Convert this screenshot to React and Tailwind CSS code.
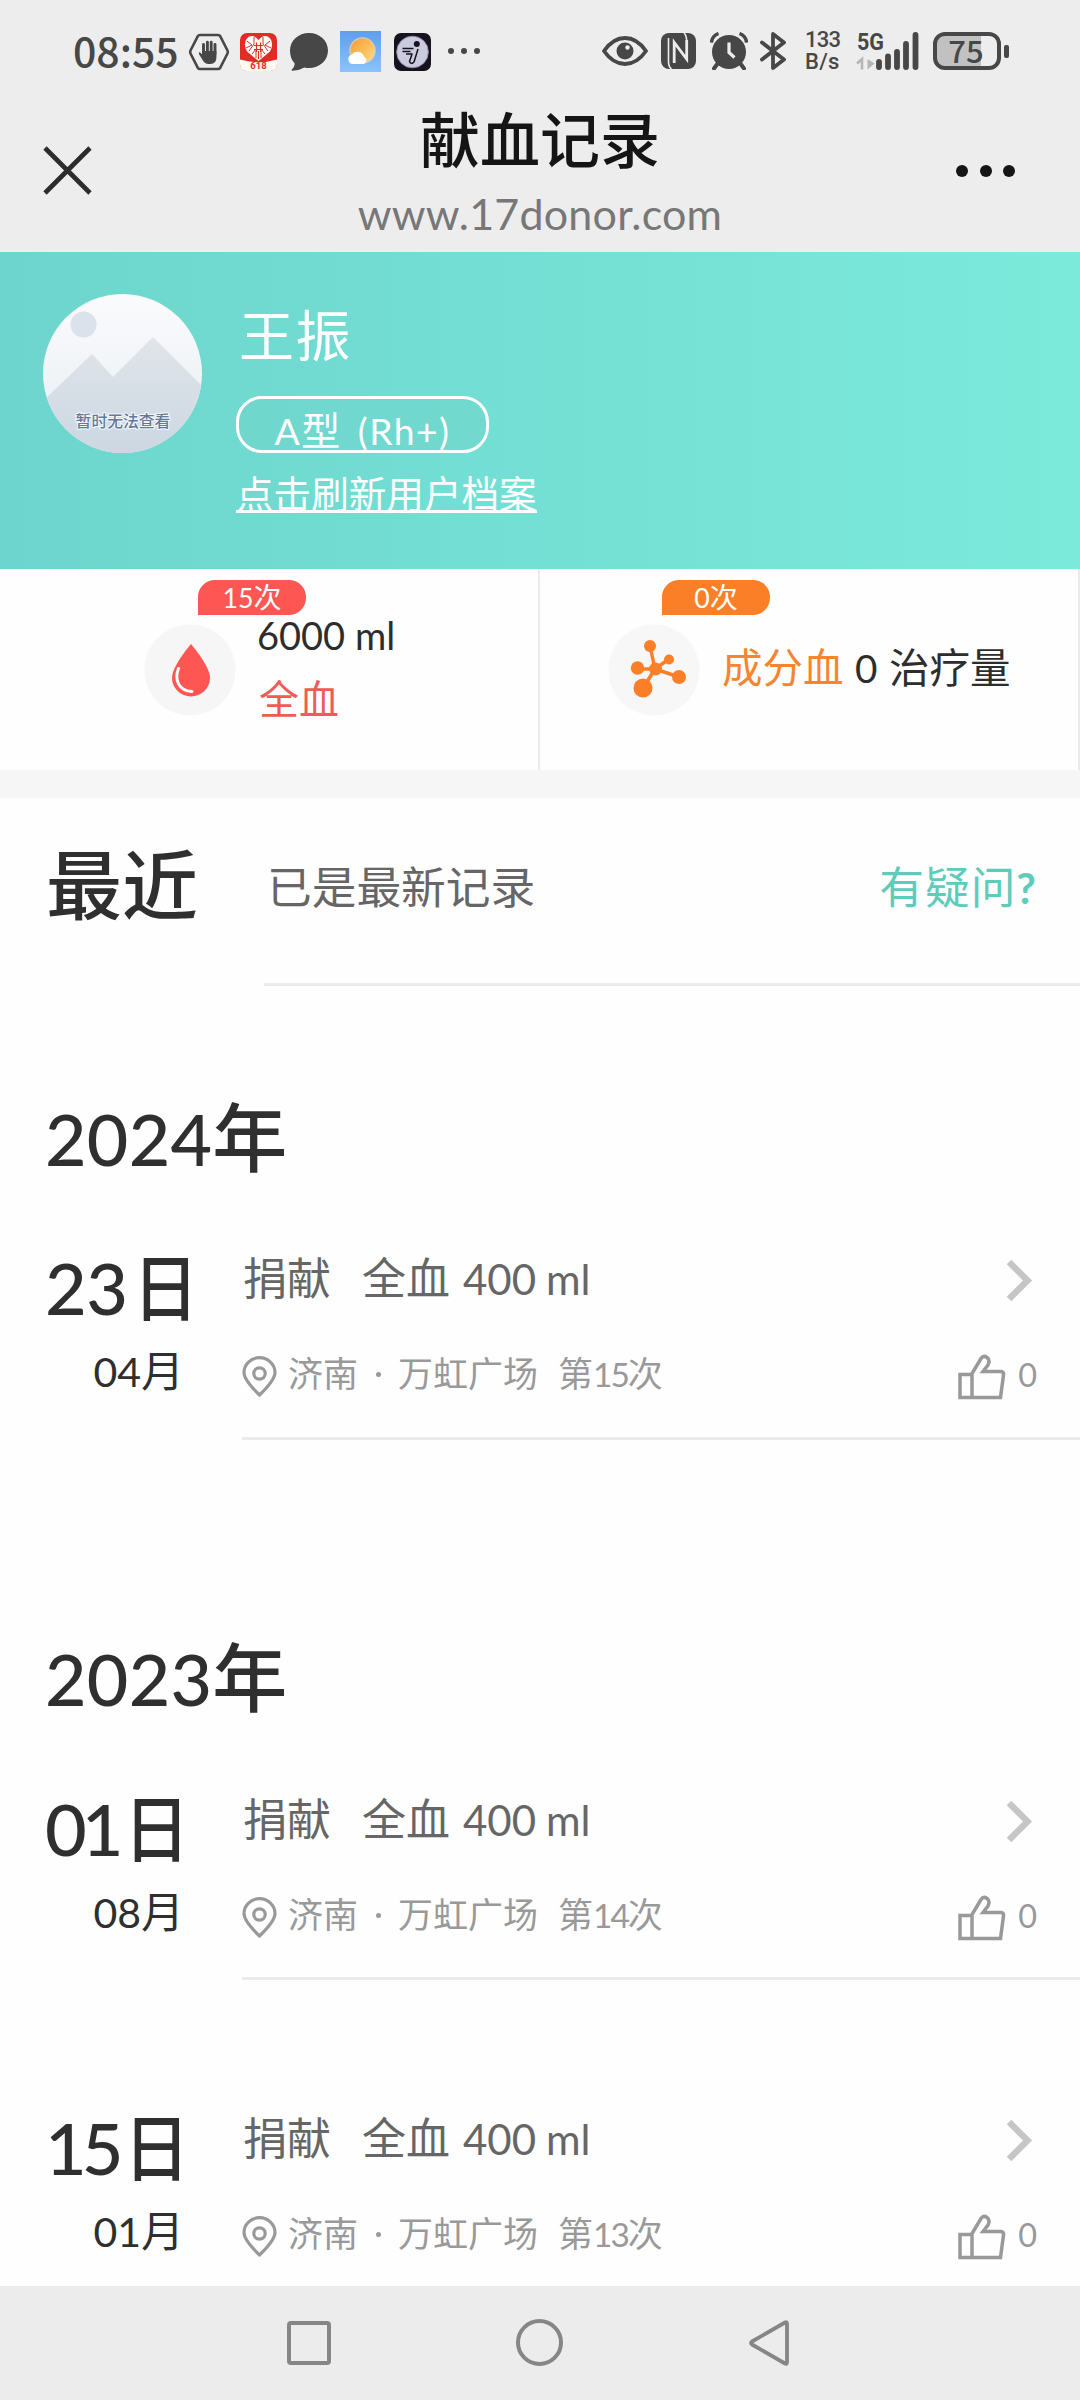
import React from "react";

const years = [
  {
    year: "2024",
    gap: "mt-[98px]",
    records: [{ day: "23", month: "04", times: "15", box: "h-[256px]", dayStyle: "w-[84px] tracking-[-0.500px]", line: true }],
  },
  {
    year: "2023",
    gap: "mt-[184px]",
    records: [
      { day: "01", month: "08", times: "14", box: "mt-px h-[255px]", dayStyle: "w-[75px] tracking-[-5px]", line: true },
      { day: "15", month: "01", times: "13", box: "mt-[64px] h-[242px]", dayStyle: "w-[75px] tracking-[-5px]", line: false },
    ],
  },
];

function Latin({ children, className = "" }) {
  return <span className={"font-[Lato,sans-serif] text-[0.955em] leading-none " + className}>{children}</span>;
}

function StatusBar() {
  return (
    <div className="flex h-[100px] items-center pl-[73px] text-[#474747]">
      <span className="w-[114px] -translate-y-px text-[41px] leading-[60px] font-medium whitespace-nowrap">08:55</span>

      <svg className="mt-[3px] ml-[1px] h-[38px] w-[42px]" viewBox="0 0 42 38">
        <path d="M12 2h18q1.500 0 2.300 1.300L39.500 17.500q.8 1.500 0 3L32.300 34.700Q31.500 36 30 36H12q-1.500 0-2.300-1.300L2.500 20.500q-.8-1.500 0-3L9.700 3.300Q10.500 2 12 2Z" fill="none" stroke="currentColor" strokeWidth="2.600" />
        <path d="M15.500 20V11.500M19.400 20V9.200M23.200 20V9.200M27 21V11.500" stroke="currentColor" strokeWidth="2.900" strokeLinecap="round" />
        <path d="M14.100 18h14.300v6.500q0 6.500-6 6.500h-2q-3.500 0-5.500-3.400l-4-6.500q-.6-2 1.200-1.700l2 1.800Z" fill="currentColor" />
      </svg>

      <svg className="mt-[3px] ml-[10px] h-[38px] w-[37px]" viewBox="0 0 37 38">
        <rect width="37" height="38" rx="7" fill="#e12c25" />
        <path d="M0 26.500Q18.500 32 37 26.500V31q0 7-7 7H7q-7 0-7-7Z" fill="#fffaf3" />
        <path d="M18.500 28 7 18.500Q3 11 6.500 6T16 4.500L18.500 7 21 4.500Q27 1 30.500 6T30 18.500Z" fill="#fff" />
        <path d="M7 8l5 4-6 3M14 4v7l-5 7M12 21l4-5v9M30 8l-5 4 6 3M23 4v7l5 7M25 21l-4-5v9M18.500 18v8" fill="none" stroke="#e12c25" strokeWidth="1" />
        <path d="M14 12.500h9M14 16.500h9M16.500 9.500v9.500M20.500 9.500v9.500" stroke="#e12c25" strokeWidth="1.200" />
        <text x="18.500" y="36" textAnchor="middle" fontSize="9.500" fontWeight="700" fill="#e12c25" fontFamily="Roboto, sans-serif">618</text>
      </svg>

      <svg className="mt-[3px] ml-[13px] h-[38px] w-[38px]" viewBox="0 0 38 38">
        <path d="M19 0C29.500 0 38 7.500 38 17.500S29.500 35 19 35q-2.500 0-4.600-.6Q9 37.500 2.300 37.800q-1.200-.3-.5-1.200Q5 33 4.600 30.200 0 25.500 0 17.500C0 7.500 8.500 0 19 0Z" fill="currentColor" />
      </svg>

      <svg className="mt-[3px] ml-[12px] h-[41px] w-[41px]" viewBox="0 0 41 41">
        <defs>
          <linearGradient id="sky" x1="0" y1="0" x2="0" y2="1">
            <stop offset="0" stopColor="#619eea" />
            <stop offset="1" stopColor="#8bc3fb" />
          </linearGradient>
          <linearGradient id="sun" x1="0" y1="0" x2="1" y2="1">
            <stop offset="0" stopColor="#f79a2c" />
            <stop offset="1" stopColor="#ffdc86" />
          </linearGradient>
        </defs>
        <rect width="41" height="41" fill="url(#sky)" />
        <circle cx="22.500" cy="19.500" r="13.200" fill="#f9dfb4" opacity=".7" />
        <circle cx="22.500" cy="19.500" r="12" fill="url(#sun)" />
        <path d="M13 33a4.800 4.800 0 0 1-1.500-9.300 7 7 0 0 1 12.500 2A4 4 0 0 1 24 33Z" fill="#fff" />
      </svg>

      <svg className="mt-[3px] ml-[13px] h-[38px] w-[37px]" viewBox="0 0 37 38">
        <rect width="37" height="38" rx="7" fill="#16121e" />
        <circle cx="18.500" cy="19" r="15.800" fill="#cbcbe0" stroke="#9a8aa8" strokeWidth="1" />
        <circle cx="22.800" cy="11" r="3" fill="#16121e" />
        <path d="M8.500 15.500h11M8.500 18.500h8M12 21h6l-2.500 7.500q1.500 3.500 4.500.5l4-13" fill="none" stroke="#16121e" strokeWidth="1.500" strokeLinejoin="round" />
      </svg>

      <span className="mt-[2px] ml-[17px] flex gap-[7px]">
        <i className="size-[6px] rounded-full bg-[#474747]" />
        <i className="size-[6px] rounded-full bg-[#474747]" />
        <i className="size-[6px] rounded-full bg-[#474747]" />
      </span>

      <div className="mr-[71px] ml-auto flex items-center pt-[2px]">
        <svg className="h-[30px] w-[46px]" viewBox="0 0 46 30">
          <path d="M2 15Q11 2 23 2t21 13Q35 28 23 28T2 15Z" fill="none" stroke="currentColor" strokeWidth="3.800" strokeLinejoin="round" />
          <circle cx="23" cy="15" r="8.500" fill="currentColor" />
          <circle cx="25.500" cy="11.500" r="2.200" fill="#ededed" />
        </svg>
        <svg className="ml-[13px] h-[36px] w-[35px]" viewBox="0 0 35 36">
          <rect width="35" height="36" rx="8" fill="currentColor" />
          <path d="M13.200 30V9.500L25.700 26V7" fill="none" stroke="#ededed" strokeWidth="2.800" />
          <path d="M7.500 5V28Q7.500 34 10.500 36M25.700 9Q25.700 2.500 23 0" fill="none" stroke="#ededed" strokeWidth="1.600" />
        </svg>
        <svg className="ml-[14px] h-[38px] w-[38px]" viewBox="0 0 38 38">
          <circle cx="19" cy="20" r="17" fill="currentColor" />
          <path d="M1.500 10.500Q2 4 8.500 1.500M36.500 10.500Q36 4 29.500 1.500" stroke="currentColor" strokeWidth="3.400" fill="none" />
          <path d="m8 31-4 5.500M30 31l4 5.500" stroke="currentColor" strokeWidth="4" strokeLinecap="round" />
          <path d="M19 10.500V20.500l5.500 5" fill="none" stroke="#ededed" strokeWidth="3.200" />
        </svg>
        <svg className="ml-[12px] h-[38px] w-[26px]" viewBox="0 0 26 38">
          <path d="M2 10.500 24 27.500 13 36V2l11 8.500L2 27.500" fill="none" stroke="currentColor" strokeWidth="3.800" strokeLinejoin="round" strokeLinecap="round" />
        </svg>
        <span className="ml-[19px] flex w-[38px] flex-col font-[Roboto,sans-serif] text-[22px] leading-[22px] font-medium tracking-[-0.800px]">
          <span>133</span>
          <span className="tracking-[0.3px]">B/s</span>
        </span>
        <svg className="ml-[14px] h-[38px] w-[64px] overflow-visible" viewBox="0 0 64 38">
          <text x="0" y="18" fontSize="23" fontWeight="700" fill="currentColor" fontFamily="Roboto, sans-serif" textLength="27" lengthAdjust="spacingAndGlyphs">5G</text>
          <path d="M0 31.500 5 27v10.500" stroke="#b5b5b5" strokeWidth="2.500" fill="none" />
          <path d="M10.500 27v10.500l7-6Z" fill="#b5b5b5" />
          <path d="M22 30v5M31 24.500v10.500M40 20v15M49 12v23M58.500 3v32" stroke="currentColor" strokeWidth="5.800" strokeLinecap="round" />
        </svg>
        <span className="ml-[12px] flex h-[38px] w-[68px] items-center justify-center rounded-[12px] border-4 border-[#474747] bg-[linear-gradient(90deg,#c1c1c1_74%,#ededed_74%)] text-[31px] leading-[30px] font-medium">
          <span className="-translate-x-px -translate-y-[1.500px]">75</span>
        </span>
        <i className="ml-[3px] h-[13px] w-[5px] rounded-[2px] bg-[#474747]" />
      </div>
    </div>
  );
}

function NavBar() {
  return (
    <div className="flex h-[152px] pl-[43px]">
      <svg className="mt-[46px] h-[49px] w-[49px]" viewBox="0 0 49 49">
        <path d="m2 2 45 45M47 2 2 47" stroke="#2c2c2c" strokeWidth="4.600" />
      </svg>
      <div className="ml-[248px] flex w-[400px] flex-col items-center">
        <h1 className="-mt-px text-[60px] leading-[76px] font-medium text-[#151515]">献血记录</h1>
        <p className="mt-[4px] font-[Lato,sans-serif] text-[43px] leading-[70px] tracking-[0.200px] text-[#777]">www.17donor.com</p>
      </div>
      <div className="mt-[65px] ml-[216px] flex gap-[11.500px]">
        <i className="size-[12px] rounded-full bg-[#151515]" />
        <i className="size-[12px] rounded-full bg-[#151515]" />
        <i className="size-[12px] rounded-full bg-[#151515]" />
      </div>
    </div>
  );
}

function Avatar() {
  return (
    <svg className="mt-[42px] h-[159px] w-[159px] shrink-0" viewBox="0 0 159 159">
      <defs>
        <clipPath id="round"><circle cx="79.500" cy="79.500" r="79.500" /></clipPath>
        <linearGradient id="air" x1="0" y1="0" x2="0" y2="1">
          <stop offset="0" stopColor="#fafbfd" />
          <stop offset="1" stopColor="#e8edf1" />
        </linearGradient>
        <linearGradient id="hill" x1="0" y1="0" x2="0" y2="1">
          <stop offset="0" stopColor="#e0e5e9" />
          <stop offset="1" stopColor="#ccd7e2" />
        </linearGradient>
      </defs>
      <g clipPath="url(#round)">
        <rect width="159" height="159" fill="url(#air)" />
        <circle cx="40.500" cy="30.500" r="13" fill="#dbe2ec" />
        <path d="M0 107 49 60 70 83 110 43 159 92V159H0Z" fill="url(#hill)" />
        <text x="80" y="133" textAnchor="middle" fontSize="15.800" fontWeight="500" fill="#64799a" stroke="#f4f8fc" strokeWidth="2" paintOrder="stroke" fontFamily="Noto Sans CJK SC, sans-serif">暂时无法查看</text>
      </g>
    </svg>
  );
}

function Profile() {
  return (
    <section className="flex h-[317px] bg-linear-to-r from-[#6dd5cd] to-[#7beadb] pl-[43px] text-white">
      <Avatar />
      <div className="flex flex-col items-start pl-[34px]">
        <h2 className="mt-[45px] pl-[3px] text-[55px] leading-[70px] tracking-[1.500px]">王振</h2>
        <div className="mt-[29px] flex h-[57px] w-[253px] justify-center rounded-[26px] border-[3px] border-white bg-[#6fd5cc]/60 pt-[4px] text-[39px] leading-[50px] whitespace-pre">
          <span className="tracking-[1.500px]">
            <Latin>A</Latin>型<Latin className="ml-[16px]">(Rh+)</Latin>
          </span>
        </div>
        <a className="mt-[19px] h-[41px] border-b-[3px] border-white text-[37.600px] leading-[40px]">点击刷新用户档案</a>
      </div>
    </section>
  );
}

function DropIcon() {
  return (
    <svg className="h-[92px] w-[92px] shrink-0" viewBox="0 0 92 92">
      <circle cx="46" cy="46" r="45.500" fill="#f6f6f6" />
      <path d="M47 20Q66 43 66 54a19 18.500 0 0 1-38 0Q28 43 47 20Z" fill="#fd5653" />
      <path d="M34.500 44.500C30 56 35 67 48 67.500" fill="none" stroke="#fff" strokeWidth="3" strokeLinecap="round" />
    </svg>
  );
}

function MoleculeIcon() {
  return (
    <svg className="h-[92px] w-[92px] shrink-0" viewBox="0 0 92 92">
      <circle cx="46" cy="46" r="45.500" fill="#f7f7f7" />
      <path d="M42 22 47 45 61 35M47 45 71 53M47 45H29M47 45 35 64" fill="none" stroke="#fb7f27" strokeWidth="3.500" />
      <g fill="#fb7f27">
        <circle cx="42" cy="22" r="6" />
        <circle cx="47.500" cy="45" r="6.500" />
        <circle cx="61" cy="35.500" r="5" />
        <circle cx="71" cy="53" r="7" />
        <circle cx="29.500" cy="44" r="6.700" />
        <circle cx="35" cy="64" r="9.500" />
      </g>
    </svg>
  );
}

function Stats() {
  return (
    <section className="grid h-[201px] grid-cols-2">
      <div className="relative flex border-r-2 border-[#ebebeb] pt-[55px] pl-[144px]">
        <span className="absolute top-[11px] left-[198px] h-[35px] w-[108px] rounded-[17px] rounded-bl-none bg-[#fd5653] text-center text-[28px] leading-[32px] text-white"><Latin>15</Latin>次</span>
        <DropIcon />
        <div className="-mt-[17px] ml-[21px]">
          <div className="flex h-[50px] items-baseline font-[Lato,sans-serif] text-[38px] leading-[56px] text-[#2d2d2d]">
            <span className="w-[98px]">6000</span>
            <span>ml</span>
          </div>
          <div className="mt-[16px] pl-[2px] text-[40px] leading-[48px] text-[#ee5c57]">全血</div>
        </div>
      </div>
      <div className="relative flex border-r-2 border-[#ebebeb] pt-[55px] pl-[68px]">
        <span className="absolute top-[11px] left-[122px] h-[35px] w-[108px] rounded-[17px] rounded-bl-none bg-[#fb7f27] text-center text-[28px] leading-[32px] text-white"><Latin>0</Latin>次</span>
        <MoleculeIcon />
        <div className="mt-[12px] ml-[22px] flex items-start text-[40.500px] leading-[60px] whitespace-nowrap text-[#2d2d2d]">
          <span className="w-[133px] text-[#f58531]">成分血</span>
          <span className="w-[34px]"><Latin>0</Latin></span>
          <span>治疗量</span>
        </div>
      </div>
    </section>
  );
}

function Recent() {
  return (
    <section className="flex h-[188px]">
      <h2 className="w-[264px] pt-[33px] pl-[46px] text-[76px] leading-[100px] font-medium text-[#2f2f2f]">最近</h2>
      <div className="flex flex-1 justify-between border-b-[3px] border-[#ebebeb] pt-[57px] pr-[43px] pl-[3px] text-[44.700px] leading-[60px]">
        <span className="text-[#666]">已是最新记录</span>
        <a className="tracking-[1px] text-[#5dccbb]">有疑问<Latin className="font-bold">?</Latin></a>
      </div>
    </section>
  );
}

function Record({ day, month, times, box, dayStyle, line }) {
  return (
    <article className={"flex " + box}>
      <div className="w-[242px] shrink-0 text-[#2f2f2f]">
        <div className="mt-[59px] flex pl-[45px] text-[73px] leading-[80px] font-medium">
          <span className={dayStyle}><Latin className="text-[72px]">{day}</Latin></span>
          <span className="scale-x-90">日</span>
        </div>
        <div className="mt-[15px] pr-[58px] text-right text-[43px] leading-[60px]"><Latin>{month}</Latin>月</div>
      </div>
      <div className={line ? "flex-1 border-b-[3px] border-[#ebebeb]" : "flex-1"}>
        <div className="mt-[62px] flex h-[60px] pl-px text-[44px] leading-[60px] text-[#666]">
          <span className="w-[119px]">捐献</span>
          <span className="w-[101px]">全血</span>
          <span className="w-[83px]"><Latin>400</Latin></span>
          <span><Latin>ml</Latin></span>
          <svg className="mt-[13px] mr-[47px] ml-auto h-[43px] w-[27px]" viewBox="0 0 27 43">
            <path d="M3 3 21.500 21.500 3 40" fill="none" stroke="#c6c6c6" strokeWidth="6.500" />
          </svg>
        </div>
        <div className="mt-[41px] flex h-[50px] text-[35px] leading-[50px] text-[#999]">
          <svg className="mt-[9px] h-[41px] w-[35px]" viewBox="0 0 35 41">
            <path d="M17.500 39Q2 24 2 16.500a15.500 14.800 0 0 1 31 0Q33 24 17.500 39Z" fill="none" stroke="#999" strokeWidth="3.200" strokeLinejoin="round" />
            <circle cx="17.500" cy="17.500" r="5.700" fill="none" stroke="#999" strokeWidth="3.200" />
          </svg>
          <span className="ml-[11px] w-[75px]">济南</span>
          <span className="flex w-[31px] justify-center"><i className="mt-[25px] size-[5px] rounded-full bg-[#999]" /></span>
          <span className="ml-[4px] w-[160px]">万虹广场</span>
          <span>第<Latin className="tracking-[-2px]">{times}</Latin>次</span>
          <svg className="mt-[7px] ml-auto h-[46px] w-[48px]" viewBox="0 0 48 46">
            <path d="M2 43.500V20.500H13.500L23 4.500Q25.500 1 29 3.500t1 7.500L25 17.500H43Q46 18 45.500 21L42.500 43.500ZM14 20.500V43.500" fill="none" stroke="#999" strokeWidth="3.500" />
          </svg>
          <span className="mt-px mr-[43px] ml-[12px] text-[34px]"><Latin>0</Latin></span>
        </div>
      </div>
    </article>
  );
}

export default function App() {
  return (
    <div className="flex h-[2400px] w-[1080px] flex-col overflow-hidden bg-[#fefefe] font-['Noto_Sans_CJK_SC',sans-serif]">
      <header className="h-[252px] shrink-0 bg-[#ededed]">
        <StatusBar />
        <NavBar />
      </header>
      <main className="h-[2034px] shrink-0 overflow-hidden">
        <Profile />
        <Stats />
        <div className="h-[28px] bg-[#f6f6f6]" />
        <Recent />
        {years.map((y) => (
          <section key={y.year}>
            <h2 className={"h-[100px] pl-[45px] text-[75px] leading-[100px] font-medium text-[#2f2f2f] " + y.gap}>
              <Latin className="tracking-[0.300px]">{y.year}</Latin>年
            </h2>
            {y.records.map((r) => (
              <Record key={r.times} {...r} />
            ))}
          </section>
        ))}
      </main>
      <footer className="flex h-[114px] shrink-0 bg-[#ececec] pt-[33px] pl-[287px]">
        <i className="mt-[2px] h-[44px] w-[44px] rounded-[4px] border-4 border-[#868686]" />
        <i className="ml-[185px] size-[47px] rounded-full border-4 border-[#868686]" />
        <svg className="ml-[185px] h-[48px] w-[42px]" viewBox="0 0 42 48">
          <path d="M37 3.500q2-1 2 1.500V43q0 2.500-2 1.500L4 25.500q-2-1.500 0-3Z" fill="none" stroke="#868686" strokeWidth="3.800" strokeLinejoin="round" />
        </svg>
      </footer>
    </div>
  );
}
